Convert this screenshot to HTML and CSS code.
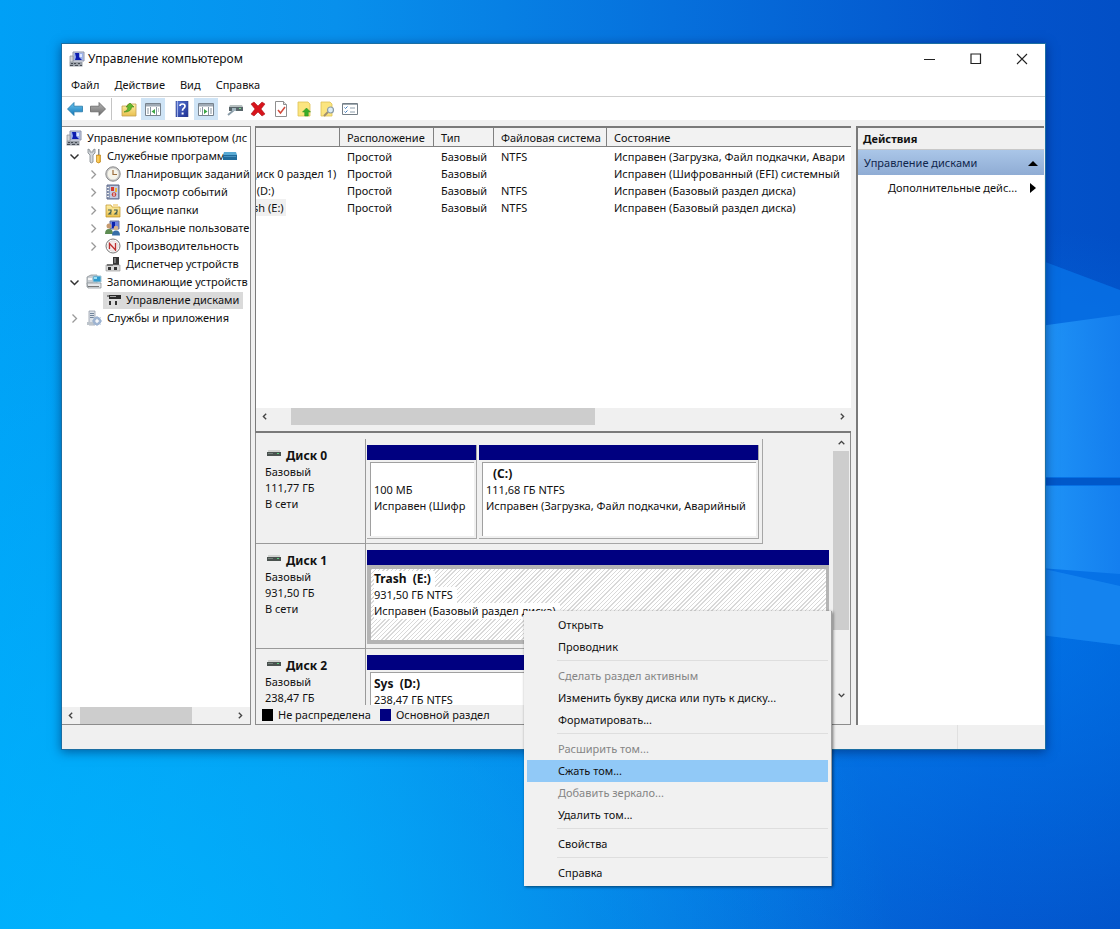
FILE: index.html
```html
<!DOCTYPE html>
<html lang="ru">
<head>
<meta charset="utf-8">
<meta name="viewport" content="width=device-width, initial-scale=1">
<title>Управление компьютером</title>
<link rel="stylesheet" href="styles.css">
</head>
<body>
<svg class="sprite" aria-hidden="true">
  <defs>
    <linearGradient id="gBlue" x1="0" y1="0" x2="0" y2="1"><stop offset="0" stop-color="#6cc4ee"/><stop offset="1" stop-color="#1277b8"/></linearGradient>
    <linearGradient id="gGrey" x1="0" y1="0" x2="0" y2="1"><stop offset="0" stop-color="#b5b5b5"/><stop offset="1" stop-color="#6e6e6e"/></linearGradient>
    <linearGradient id="gFolder" x1="0" y1="0" x2="0" y2="1"><stop offset="0" stop-color="#fff0a8"/><stop offset="1" stop-color="#e9c04e"/></linearGradient>
    <linearGradient id="gHelp" x1="0" y1="0" x2="1" y2="1"><stop offset="0" stop-color="#5c7bd8"/><stop offset="1" stop-color="#1d2f92"/></linearGradient>
    <symbol id="computer" viewBox="0 0 16 16">
      <path d="M4 1h11v9H4z" fill="#c9cfdf" stroke="#8b93ae"/><path d="M5 2h9v7H5z" fill="#9bb1ec"/>
      <path d="M6 2h4v4l3 3H6l1-3z" fill="#0b1cb0"/><path d="M11 3h2v3h-2z" fill="#dfe8ff"/>
      <path d="M1 5h3v6H1z" fill="#d5d7da" stroke="#888d96" stroke-width=".7"/>
      <path d="M.5 11h13v4.500H.5z" fill="#9aa0a8"/><path d="M2 12h2v1H2zm3 0h2v1H5zm4 0h2v1H9zM1 14h3v1H1zm5 0h3v1H6zm5 0h2v1h-2z" fill="#464c55"/>
    </symbol>
    <symbol id="tools" viewBox="0 0 16 16">
      <path d="M2 1v4l2 2v7q1 2 3 0V7l2-2V1L7 2v2H4V2z" fill="#d4d8dc" stroke="#7d858c" stroke-width=".8"/>
      <path d="M12 1h1.500v6H12z" fill="#8a8f94"/><path d="M10.500 7h4v7q-2 2-4 0z" fill="#f1b530" stroke="#b67a10" stroke-width=".6"/><path d="M12 8v6" stroke="#ffe08a"/>
    </symbol>
    <symbol id="clock" viewBox="0 0 16 16">
      <circle cx="8" cy="8" r="7.200" fill="#c8c8c8" stroke="#8c8c8c"/><circle cx="8" cy="8" r="5.500" fill="#f6f4ea"/>
      <path d="M8 4v4.500h4" fill="none" stroke="#9b6d3c" stroke-width="1.200"/>
    </symbol>
    <symbol id="events" viewBox="0 0 16 16">
      <path d="M2 1h12v14H2z" fill="#8f9cb8" stroke="#626d8c"/><path d="M5 2h8v12H5z" fill="#c3cce2"/><path d="M2 3h2v1H2zm0 3h2v1H2zm0 3h2v1H2zm0 3h2v1H2z" fill="#eee"/>
      <path d="M6 3h3v4H6z" fill="#d53b30"/><path d="M10 4h2v4h-2z" fill="#efb43a"/><circle cx="9" cy="10.500" r="2.300" fill="#c6423d"/><path d="M9 9v3" stroke="#fff"/>
    </symbol>
    <symbol id="shared" viewBox="0 0 16 16">
      <path d="M1 3h5l1 2h8v10H1z" fill="url(#gFolder)" stroke="#bb8f24" stroke-width=".7"/>
      <path d="M3 8h3v2l-2 2h2.500M9 8h3v2l-2 2h2.500" fill="none" stroke="#3e5d54" stroke-width="1.200"/>
      <path d="M8 2h5v3H8z" fill="#f5dda0"/>
    </symbol>
    <symbol id="users" viewBox="0 0 16 16">
      <path d="M5 1h9v8H5z" fill="#7185e2" stroke="#6a739a"/><path d="M7 2h3v6H7z" fill="#0c21ac"/>
      <circle cx="4" cy="6" r="2.500" fill="#c69a6f"/><path d="M0 14q0-5 4-5t4 5z" fill="#5d8c52"/>
      <circle cx="11" cy="8" r="2.300" fill="#d8b48b"/><path d="M7 15.500q0-5 4-5t4 5z" fill="#386fa8"/>
    </symbol>
    <symbol id="perf" viewBox="0 0 16 16">
      <circle cx="8" cy="8" r="7" fill="#fff" stroke="#777"/><circle cx="8" cy="8" r="5.300" fill="#f5e9e9" stroke="#c7c7c7" stroke-width=".5"/>
      <path d="M4.500 11V5.500L10.500 12V5" fill="none" stroke="#bf3030" stroke-width="1.300"/>
    </symbol>
    <symbol id="devices" viewBox="0 0 16 16">
      <path d="M8 1h6v8H8z" fill="#353535"/><path d="M9 2h2v5H9z" fill="#777"/><path d="M1 9h14v6H1z" fill="#d9d9d9" stroke="#8d8d8d" stroke-width=".6"/>
      <path d="M3 11h3v3H3zm6 0h3v3H9z" fill="#333"/><path d="M2 8h6v2H2z" fill="#777"/>
    </symbol>
    <symbol id="storage" viewBox="0 0 16 16">
      <path d="M1 3l4-2h6v12H1z" fill="#c8cdd2" stroke="#7f868d" stroke-width=".7"/><path d="M1 9h14v5H2z" fill="#e5e8eb" stroke="#7f868d" stroke-width=".7"/>
      <path d="M7 2h8v6H7z" fill="#2d9bd0" stroke="#a7c4d1"/><path d="M8 3h3v2H8z" fill="#9ce0f4"/><path d="M2 12h11v1H2z" fill="#777"/><path d="M2 4h4v2H2z" fill="#f5f5f5"/>
    </symbol>
    <symbol id="diskmgmt" viewBox="0 0 16 16">
      <path d="M4 3h12v4H4z" fill="#2c2c2c"/><path d="M2 3h2v2H2z" fill="#888"/><path d="M5 4h6v1H5z" fill="#aaa"/><path d="M2 7h12v8H2z" fill="#dedede"/><path d="M4 9h2v4H4zm6 0h2v4h-2z" fill="#333"/>
    </symbol>
    <symbol id="services" viewBox="0 0 16 16">
      <path d="M3 1h6v14H3z" fill="#dde2e8" stroke="#8994a2" stroke-width=".7"/><path d="M4 3h4v1H4zm0 2h4v1H4zm0 2h4v1H4z" fill="#71839a"/><path d="M1 12h9v3H1z" fill="#bdc4cb"/>
      <circle cx="11" cy="11" r="3.300" fill="none" stroke="#9db3d1" stroke-width="2"/><path d="M11 6v10M6 11h10M7.500 7.500l7 7m0-7l-7 7" stroke="#9db3d1"/><circle cx="11" cy="11" r="1.600" fill="#f5f7fb"/>
    </symbol>
    <symbol id="chevron-right" viewBox="0 0 9 9"><path d="M2.500 0.500l4 4-4 4" fill="none" stroke="#999" stroke-width="1.300"/></symbol>
    <symbol id="chevron-down" viewBox="0 0 9 9"><path d="M0.500 2.500l4 4 4-4" fill="none" stroke="#333" stroke-width="1.500"/></symbol>
    <symbol id="arrow" viewBox="0 0 8 8"><path d="M5.500 1.500L3 4l2.500 2.500" fill="none" stroke="#444" stroke-width="1.200"/></symbol>
    <symbol id="disk" viewBox="0 0 14 8"><path d="M1 1h12v2H1z" fill="#d2d4d2"/><path d="M0 3h14v4H0z" fill="#4a524f"/><path d="M1 4h5v1H1z" fill="#75807b"/><path d="M10 4h2v1h-2z" fill="#5bd37f"/></symbol>
    <symbol id="volume" viewBox="0 0 14 8"><path d="M1 0h12l1 3H0z" fill="#58a9d3"/><path d="M0 3h14v5H0z" fill="#216b9b"/><path d="M1 4h12v1H1z" fill="#4791bd"/></symbol>
    <symbol id="back" viewBox="0 0 16 16"><path d="M.5 8L7 1.500v3.700h8.500v5.600H7v3.700z" fill="url(#gBlue)" stroke="#2679a8" stroke-width=".8"/></symbol>
    <symbol id="forward" viewBox="0 0 16 16"><path d="M15.500 8L9 1.500v3.700H.5v5.600H9v3.700z" fill="url(#gGrey)" stroke="#646464" stroke-width=".8"/></symbol>
    <symbol id="up" viewBox="0 0 16 16"><path d="M1 5h5l1-2h8v12H1z" fill="url(#gFolder)" stroke="#c1a052" stroke-width=".8"/><path d="M3 11q4-1 4-5H5l4-4 4 4h-2.500q0 5-7.500 5z" fill="#63b92e" stroke="#3d8518" stroke-width=".6"/></symbol>
    <symbol id="pane-left" viewBox="0 0 16 16"><path d="M.5 2.500h15v12H.5z" fill="#fff" stroke="#78838e"/><path d="M1 3h14v2.500H1z" fill="#9ea9b4"/><path d="M5.500 6v8M11.500 6v8M2 8h2M2 10h2M2 12h2M13 8h1M13 10h1" stroke="#8795a1"/><path d="M10 8v5L6.500 10.500z" fill="#39a544"/></symbol>
    <symbol id="pane-right" viewBox="0 0 16 16"><path d="M.5 2.500h15v12H.5z" fill="#fff" stroke="#78838e"/><path d="M1 3h14v2.500H1z" fill="#9ea9b4"/><path d="M4.500 6v8M10.500 6v8M2 8h1M2 10h1M12 8h2M12 10h2M12 12h2" stroke="#8795a1"/><path d="M6 8v5l3.500-2.500z" fill="#39a544"/></symbol>
    <symbol id="help" viewBox="0 0 16 16"><path d="M2 0h12v16H2z" fill="url(#gHelp)" stroke="#33438a" stroke-width=".6"/><path d="M3.500 0v16" stroke="#9fb0e8"/><path d="M6 5q0-2 2.500-2T11 5.200q0 1.300-1.500 2.200-1 .6-1 2.400" fill="none" stroke="#fff" stroke-width="1.700"/><path d="M7.600 11.500h2v2h-2z" fill="#fff"/></symbol>
    <symbol id="connect" viewBox="0 0 16 16"><path d="M3 4h12l1 2H2z" fill="#b7c0c0"/><path d="M2 6h14v4H2z" fill="#59666b"/><path d="M12 7h2v1h-2z" fill="#7be28f"/><path d="M1 14l6-5" stroke="#8a9ca8" stroke-width="2"/><path d="M5 7h4v3H5z" fill="#a3b6bf"/></symbol>
    <symbol id="delete" viewBox="0 0 16 16"><path d="M1 3l3-2 4 4 4-4 3 2-4 5 4 5-3 2-4-4-4 4-3-2 4-5z" fill="#d8141c" stroke="#9c080d" stroke-width=".5"/></symbol>
    <symbol id="check" viewBox="0 0 16 16"><path d="M2.500.5h8l3 3v12h-11z" fill="#fff" stroke="#8f8f8f"/><path d="M10.500.5v3h3" fill="#ddd" stroke="#8f8f8f"/><path d="M5 9l2.500 3L12 6" fill="none" stroke="#d24839" stroke-width="1.500"/></symbol>
    <symbol id="page-up" viewBox="0 0 16 16"><path d="M2 1h10l2 2v12H2z" fill="#fbe57f" stroke="#dec257" stroke-width=".8"/><path d="M10.500 7l4 4h-2.200v4H8.700v-4H6.500z" fill="#39ad29" stroke="#2a8d1c" stroke-width=".5"/></symbol>
    <symbol id="page-find" viewBox="0 0 16 16"><path d="M2 1h9l2 2v12H2z" fill="#fbe57f" stroke="#dec257" stroke-width=".8"/><path d="M9 11l-4 4" stroke="#a3906d" stroke-width="2"/><circle cx="11.500" cy="9" r="3" fill="#dcedf6" stroke="#8b9ba5" stroke-width="1.200"/></symbol>
    <symbol id="props" viewBox="0 0 16 16"><path d="M.5 2.500h15v11H.5z" fill="#fff" stroke="#757f87"/><path d="M1 3h14v1H1z" fill="#a1abb2"/><path d="M2.500 6.500l1 1 2-2m-3 5l1 1 2-2" fill="none" stroke="#3c78bb"/><path d="M8 7h5M8 11h5" stroke="#8fa0ae"/></symbol>
  </defs>
</svg>

<div class="desktop">
  <svg class="wallpaper" viewBox="0 0 1120 929" preserveAspectRatio="none" aria-hidden="true">
    <defs>
      <linearGradient id="beam" x1="0" y1="0" x2="1" y2="0"><stop offset="0" stop-color="#2aa4ff" stop-opacity=".7"/><stop offset="1" stop-color="#1d88f5" stop-opacity=".6"/></linearGradient>
    </defs>
    <path d="M1040 260L1120 290V645L1040 635z" fill="#0874e8" opacity=".75"/>
    <path d="M1040 326L1120 315V477H1040z" fill="url(#beam)"/>
    <path d="M1040 486H1120V574L1040 568z" fill="url(#beam)"/>
    <path d="M1040 568L1120 586V645L1040 635z" fill="#1e90f5" opacity=".6"/>
    <path d="M1040 478H1120V485H1040z" fill="#0058ca"/>
  </svg>

  <main class="window">
    <header class="titlebar">
      <svg class="icon"><use href="#computer"/></svg>
      <h1 class="title">Управление компьютером</h1>
      <div class="captions">
        <button class="caption" aria-label="Свернуть"><svg viewBox="0 0 12 12"><path d="M0 6.500h11" stroke="#222" fill="none"/></svg></button>
        <button class="caption" aria-label="Развернуть"><svg viewBox="0 0 12 12"><path d="M1 1h9.500v9.500H1z" stroke="#222" fill="none" stroke-width="1.200"/></svg></button>
        <button class="caption" aria-label="Закрыть"><svg viewBox="0 0 12 12"><path d="M1 1l10 10M11 1L1 11" stroke="#222" fill="none" stroke-width="1.100"/></svg></button>
      </div>
    </header>
    <nav class="menubar">
      <button>Файл</button><button>Действие</button><button>Вид</button><button>Справка</button>
    </nav>
    <div class="toolbar">
      <div class="group">
        <button aria-label="Назад"><svg class="icon"><use href="#back"/></svg></button>
        <button aria-label="Вперед"><svg class="icon"><use href="#forward"/></svg></button>
      </div>
      <div class="group divided">
        <button aria-label="Вверх"><svg class="icon"><use href="#up"/></svg></button>
        <button class="on" aria-label="Дерево консоли"><svg class="icon"><use href="#pane-left"/></svg></button>
      </div>
      <div class="group">
        <button aria-label="Помощь"><svg class="icon"><use href="#help"/></svg></button>
        <button class="on" aria-label="Панель действий"><svg class="icon"><use href="#pane-right"/></svg></button>
      </div>
      <div class="group">
        <button aria-label="Подключить"><svg class="icon"><use href="#connect"/></svg></button>
        <button aria-label="Удалить"><svg class="icon"><use href="#delete"/></svg></button>
        <button aria-label="Проверить"><svg class="icon"><use href="#check"/></svg></button>
        <button aria-label="Открыть папку"><svg class="icon"><use href="#page-up"/></svg></button>
        <button aria-label="Найти"><svg class="icon"><use href="#page-find"/></svg></button>
        <button aria-label="Параметры"><svg class="icon"><use href="#props"/></svg></button>
      </div>
    </div>

    <div class="workspace">
      <section class="tree-pane">
        <ul class="tree">
          <li class="node root"><svg class="icon"><use href="#computer"/></svg><span>Управление компьютером (лс</span></li>
          <li class="node"><svg class="chev"><use href="#chevron-down"/></svg><svg class="icon"><use href="#tools"/></svg><span>Служебные программы</span></li>
          <li class="node sub"><svg class="chev"><use href="#chevron-right"/></svg><svg class="icon"><use href="#clock"/></svg><span>Планировщик заданий</span></li>
          <li class="node sub"><svg class="chev"><use href="#chevron-right"/></svg><svg class="icon"><use href="#events"/></svg><span>Просмотр событий</span></li>
          <li class="node sub"><svg class="chev"><use href="#chevron-right"/></svg><svg class="icon"><use href="#shared"/></svg><span>Общие папки</span></li>
          <li class="node sub"><svg class="chev"><use href="#chevron-right"/></svg><svg class="icon"><use href="#users"/></svg><span>Локальные пользовате</span></li>
          <li class="node sub"><svg class="chev"><use href="#chevron-right"/></svg><svg class="icon"><use href="#perf"/></svg><span>Производительность</span></li>
          <li class="node sub"><span class="chev"></span><svg class="icon"><use href="#devices"/></svg><span>Диспетчер устройств</span></li>
          <li class="node"><svg class="chev"><use href="#chevron-down"/></svg><svg class="icon"><use href="#storage"/></svg><span>Запоминающие устройств</span></li>
          <li class="node sub"><span class="chev"></span><span class="picked"><svg class="icon"><use href="#diskmgmt"/></svg><span>Управление дисками</span></span></li>
          <li class="node"><svg class="chev"><use href="#chevron-right"/></svg><svg class="icon"><use href="#services"/></svg><span>Службы и приложения</span></li>
        </ul>
        <svg class="drag-icon"><use href="#volume"/></svg>
        <div class="hscroll tree-scroll">
          <button aria-label="Влево"><svg class="arrow"><use href="#arrow"/></svg></button>
          <div class="track"><div class="thumb"></div></div>
          <button aria-label="Вправо"><svg class="arrow right"><use href="#arrow"/></svg></button>
        </div>
      </section>

      <section class="center">
        <div class="list-pane">
          <table class="volumes">
            <colgroup><col class="c-name"><col class="c-layout"><col class="c-type"><col class="c-fs"><col></colgroup>
            <thead><tr><th></th><th>Расположение</th><th>Тип</th><th>Файловая система</th><th>Состояние</th></tr></thead>
            <tbody>
              <tr><td><span class="name">(C:)</span></td><td>Простой</td><td>Базовый</td><td>NTFS</td><td>Исправен (Загрузка, Файл подкачки, Авари</td></tr>
              <tr><td><span class="name unnamed">(Диск 0 раздел 1)</span></td><td>Простой</td><td>Базовый</td><td></td><td>Исправен (Шифрованный (EFI) системный</td></tr>
              <tr><td><span class="name">Sys (D:)</span></td><td>Простой</td><td>Базовый</td><td>NTFS</td><td>Исправен (Базовый раздел диска)</td></tr>
              <tr><td><span class="name current">Trash (E:)</span></td><td>Простой</td><td>Базовый</td><td>NTFS</td><td>Исправен (Базовый раздел диска)</td></tr>
            </tbody>
          </table>
          <div class="hscroll list-scroll">
            <button aria-label="Влево"><svg class="arrow"><use href="#arrow"/></svg></button>
            <div class="track"><div class="thumb"></div></div>
            <button aria-label="Вправо"><svg class="arrow right"><use href="#arrow"/></svg></button>
          </div>
        </div>

        <div class="disk-pane">
          <div class="disk-view">
            <div class="disks">
              <article class="disk">
                <div class="disk-info"><h2><svg class="disk-icon"><use href="#disk"/></svg>Диск 0</h2><p>Базовый</p><p>111,77 ГБ</p><p>В сети</p></div>
                <div class="graph partial">
                  <div class="part small"><div class="bar"></div><div class="box"><b>&nbsp;</b><p>100 МБ</p><p>Исправен (Шифр</p></div></div>
                  <div class="part large"><div class="bar"></div><div class="box"><b class="indent">(C:)</b><p>111,68 ГБ NTFS</p><p>Исправен (Загрузка, Файл подкачки, Аварийный</p></div></div>
                </div>
              </article>
              <article class="disk">
                <div class="disk-info"><h2><svg class="disk-icon"><use href="#disk"/></svg>Диск 1</h2><p>Базовый</p><p>931,50 ГБ</p><p>В сети</p></div>
                <div class="graph">
                  <div class="part selected"><div class="bar"></div><div class="box"><b>Trash&nbsp; (E:)</b><p>931,50 ГБ NTFS</p><p>Исправен (Базовый раздел диска)</p></div></div>
                </div>
              </article>
              <article class="disk">
                <div class="disk-info"><h2><svg class="disk-icon"><use href="#disk"/></svg>Диск 2</h2><p>Базовый</p><p>238,47 ГБ</p></div>
                <div class="graph">
                  <div class="part"><div class="bar"></div><div class="box"><b>Sys&nbsp; (D:)</b><p>238,47 ГБ NTFS</p></div></div>
                </div>
              </article>
            </div>
            <div class="vscroll">
              <button aria-label="Вверх"><svg class="arrow up"><use href="#arrow"/></svg></button>
              <div class="track"><div class="thumb"></div></div>
              <button aria-label="Вниз"><svg class="arrow down"><use href="#arrow"/></svg></button>
            </div>
          </div>
          <div class="legend"><span class="swatch free"></span><span class="legend-label">Не распределена</span><span class="swatch primary"></span><span class="legend-label">Основной раздел</span></div>
        </div>
      </section>

      <aside class="actions">
        <h2 class="actions-title">Действия</h2>
        <button class="actions-group">Управление дисками<svg class="tri" viewBox="0 0 10 10"><path d="M0 8l5-5 5 5z"/></svg></button>
        <button class="actions-item">Дополнительные дейс...<svg class="tri" viewBox="0 0 10 10"><path d="M2 0l6 5-6 5z"/></svg></button>
      </aside>
    </div>
    <footer class="status"><span></span><span></span></footer>
  </main>

  <div class="context" role="menu">
    <button role="menuitem">Открыть</button>
    <button role="menuitem">Проводник</button>
    <hr>
    <button role="menuitem" disabled>Сделать раздел активным</button>
    <button role="menuitem">Изменить букву диска или путь к диску...</button>
    <button role="menuitem">Форматировать...</button>
    <hr>
    <button role="menuitem" disabled>Расширить том...</button>
    <button role="menuitem" class="hot">Сжать том...</button>
    <button role="menuitem" disabled>Добавить зеркало...</button>
    <button role="menuitem">Удалить том...</button>
    <hr>
    <button role="menuitem">Свойства</button>
    <hr>
    <button role="menuitem">Справка</button>
  </div>
</div>
</body>
</html>
```
FILE: styles.css
```css
* { box-sizing: border-box; }

body {
  margin: 0;
  font: 11px/16px "Noto Sans", "Open Sans", sans-serif;
  color: #111;
}

h1, h2, p, ul { margin: 0; padding: 0; }
h1, h2, b { font-size: 12px; line-height: 16px; }

button {
  margin: 0;
  padding: 0;
  border: 0;
  background: none;
  font: inherit;
  color: inherit;
  text-align: left;
}

.sprite { position: absolute; width: 0; height: 0; }
.icon { flex: none; width: 16px; height: 16px; display: block; }

/* Desktop */
.desktop {
  position: relative;
  display: flex;
  height: 100vh;
  padding: 43px 74px 179px 61px;
  overflow: hidden;
  background:
    radial-gradient(circle at 10% 110%, rgba(0, 184, 255, .8), transparent 55%),
    radial-gradient(ellipse at 86% 66%, rgba(0, 136, 250, .65), transparent 45%),
    linear-gradient(90deg, #00a0f6 0%, #0890ec 30%, #0670dc 60%, #0354cc 88%, #024fc6 100%);
}
.wallpaper { position: absolute; inset: 0; width: 100%; height: 100%; }

/* Window frame */
.window {
  position: relative;
  flex: 1;
  min-width: 0;
  display: flex;
  flex-direction: column;
  border: 1px solid #1b6ea3;
  background: #f0f0f0;
  box-shadow: 0 2px 10px rgba(0, 20, 70, .5);
}
.titlebar { flex: none; display: flex; align-items: center; height: 30px; padding-left: 7px; background: #fff; }
.title { margin-left: 3px; font-weight: 400; }
.captions { display: flex; margin-left: auto; }
.caption { display: grid; place-items: center; width: 46px; height: 30px; }
.caption svg { width: 12px; height: 12px; }

.menubar { flex: none; display: flex; gap: 1px; height: 23px; padding-left: 2px; background: #fff; border-bottom: 1px solid #cfcfcf; }
.menubar button { padding: 0 7px; }

.toolbar { flex: none; display: flex; gap: 6px; height: 23px; padding-left: 2px; background: #fff; align-items: center; }
.group { display: flex; gap: 1px; }
.toolbar button { display: grid; place-items: center; width: 22px; height: 22px; }
.toolbar .on { width: 24px; background: #cfe4f6; }
.divided { border-left: 1px solid #c4c4c4; padding-left: 6px; margin-left: -4px; }

.workspace {
  flex: 1;
  min-height: 0;
  display: grid;
  grid-template-rows: minmax(0, 1fr);
  grid-template-columns: 189px minmax(0, 1fr) 188px;
  gap: 4px;
  padding: 6px 1px 0 0;
}

/* Console tree */
.tree-pane {
  position: relative;
  display: flex;
  flex-direction: column;
  justify-content: space-between;
  background: #fff;
  border: solid #8c8c8c;
  border-width: 1px 1px 1px 0;
  overflow: hidden;
}
.tree { list-style: none; padding-top: 2px; overflow: hidden; }
.node { display: flex; align-items: center; height: 18px; padding-left: 8px; white-space: nowrap; }
.node.root { padding-left: 4px; }
.node span { margin-left: 5px; }
.node.sub { padding-left: 27px; }
.node .chev { flex: none; width: 9px; height: 9px; margin: 0 7px 0 0; }
.node .picked { display: flex; align-items: center; height: 17px; margin: 0 0 0 -2px; padding: 0 4px 0 2px; background: #dadada; }
.drag-icon { position: absolute; left: 161px; top: 25px; width: 14px; height: 8px; }

/* Scroll bars */
.hscroll { flex: none; display: flex; height: 17px; background: #f0f0f0; }
.hscroll button, .vscroll button { display: grid; place-items: center; width: 17px; height: 17px; }
.track { flex: 1; display: flex; }
.thumb { background: #cdcdcd; }
.arrow { width: 9px; height: 9px; }
.arrow.right { transform: rotate(180deg); }
.arrow.up { transform: rotate(90deg); }
.arrow.down { transform: rotate(270deg); }
.tree-scroll .thumb { width: 74%; }
.tree-scroll { padding-right: 1px; }
.tree-scroll .track { padding-left: 1px; }

/* Volume list */
.center { display: grid; grid-template-rows: minmax(0, 307fr) minmax(0, 292fr); min-width: 0; padding-right: 1px; }
.list-pane {
  display: flex;
  flex-direction: column;
  justify-content: space-between;
  min-width: 0;
  overflow: hidden;
  background: #fff;
  border: solid #7a7a7a;
  border-width: 2px 0 2px 1px;
}
.volumes { width: 100%; table-layout: fixed; border-collapse: separate; border-spacing: 0; }
.c-name { width: 84px; }
.c-layout { width: 94px; }
.c-type { width: 60px; }
.c-fs { width: 113px; }
.volumes th, .volumes td { padding: 0 0 0 7px; text-align: left; font-weight: 400; white-space: nowrap; overflow: hidden; }
.volumes th { height: 19px; padding-top: 2px; background: #f2f2f2; border: solid #808080; border-width: 0 1px 1px 0; }
.volumes th:last-child { border-right: 0; }
.volumes td { height: 17px; line-height: 17px; }
.volumes tbody::before { content: ""; display: block; height: 1px; }
.volumes td:first-child { padding-left: 0; }
.name { display: inline-block; margin-left: -19px; padding-right: 2px; }
.name.unnamed { margin-left: -11px; }
.name.current { background: #f0f0f0; }
.list-scroll { height: 23px; padding-bottom: 6px; }
.list-scroll .track { padding-left: 18px; }
.list-scroll .thumb { width: 56%; }

/* Graphical disk view */
.disk-pane { display: flex; flex-direction: column; min-height: 0; border: solid #8c8c8c; border-width: 0 1px 1px; }
.disk-view { flex: 1; min-height: 0; display: flex; overflow: hidden; }
.disks { flex: 1; min-width: 0; padding-top: 6px; overflow: hidden; }
.disk { display: flex; height: 105px; }
.disk-info { flex: none; width: 110px; padding: 9px 0 0 9px; border: solid #9a9a9a; border-width: 0 1px 1px 0; }
.disk-info h2 { display: flex; gap: 5px; padding-left: 2px; font-weight: 700; }
.disk-icon { width: 14px; height: 8px; margin-top: 1px; }
.graph { flex: 1; min-width: 0; display: flex; gap: 2px; margin-right: 1px; padding: 6px 3px 4px 1px; border: solid #a6a6a6; border-width: 0 0 1px; }
.partial { flex: none; width: 397px; border-right-width: 1px; }
.part { flex: 1; min-width: 0; display: flex; flex-direction: column; border: solid #a8a8a8; border-width: 0 1px 1px 0; }
.small { flex: 0 0 110px; }
.bar { height: 15px; background: #000080; }
.box {
  flex: 1;
  margin: 2px 2px 2px 3px;
  padding: 3px 3px 0;
  background: #fff;
  border: solid #a0a0a0;
  border-width: 1px 0 0 1px;
  overflow: hidden;
  white-space: nowrap;
}
.box p { overflow: hidden; }
.box b { display: block; }
.box .indent { padding-left: 7px; }
.selected { border: 0; }
.selected .box {
  margin: 0;
  padding: 2px 3px 0;
  border: solid #b4b4b4;
  border-width: 4px 3px 4px 4px;
  background: repeating-linear-gradient(135deg, #d9d9d9 0 1px, #fff 1px 3px);
}
.selected .box b, .selected .box p { width: max-content; padding-right: 4px; background: #fff; }

.vscroll { flex: none; display: flex; flex-direction: column; width: 17px; padding: 1px 0; background: #f0f0f0; }
.vscroll .track { flex-direction: column; }
.vscroll .thumb { height: 76%; margin-right: 1px; }

.legend { flex: none; display: flex; align-items: center; height: 19px; gap: 5px; padding-left: 6px; }
.legend-label { min-width: 97px; }
.swatch { width: 11px; height: 12px; }
.free { background: #000; }
.primary { background: #000080; }

/* Actions pane */
.actions { background: #fff; border: solid #7a7a7a; border-width: 2px 0 0 2px; display: flex; flex-direction: column; }
.actions-title { height: 22px; padding: 3px 0 0 5px; background: #f0f0f0; border-bottom: 1px solid #c8c8c8; font-size: 11px; }
.actions-group { display: flex; align-items: center; justify-content: space-between; height: 25px; padding: 0 6px; background: linear-gradient(#aac6e8, #8facd4); color: #10264c; }
.actions-item { display: flex; align-items: center; justify-content: space-between; height: 26px; padding: 0 6px 0 30px; white-space: nowrap; }
.tri { flex: none; width: 10px; height: 10px; fill: #000; }

.status { flex: none; display: grid; grid-template-columns: 1fr 88px; height: 24px; }
.status span + span { border-left: 1px solid #e0e0e0; }

/* Volume shortcut menu */
.context {
  position: absolute;
  left: 524px;
  top: 611px;
  width: 308px;
  padding: 3px 3px 2px;
  display: flex;
  flex-direction: column;
  background: #f1f1f1;
  border-right: 1px solid #a0a0a0;
  box-shadow: 1px 1px 3px rgba(0, 0, 0, .55);
}
.context button { height: 22px; padding-left: 31px; }
.context button:disabled { color: #858585; }
.context .hot { background: #91c9f7; }
.context hr { margin: 2px 0 4px 30px; border: 0; border-top: 1px solid #dedede; }
```
